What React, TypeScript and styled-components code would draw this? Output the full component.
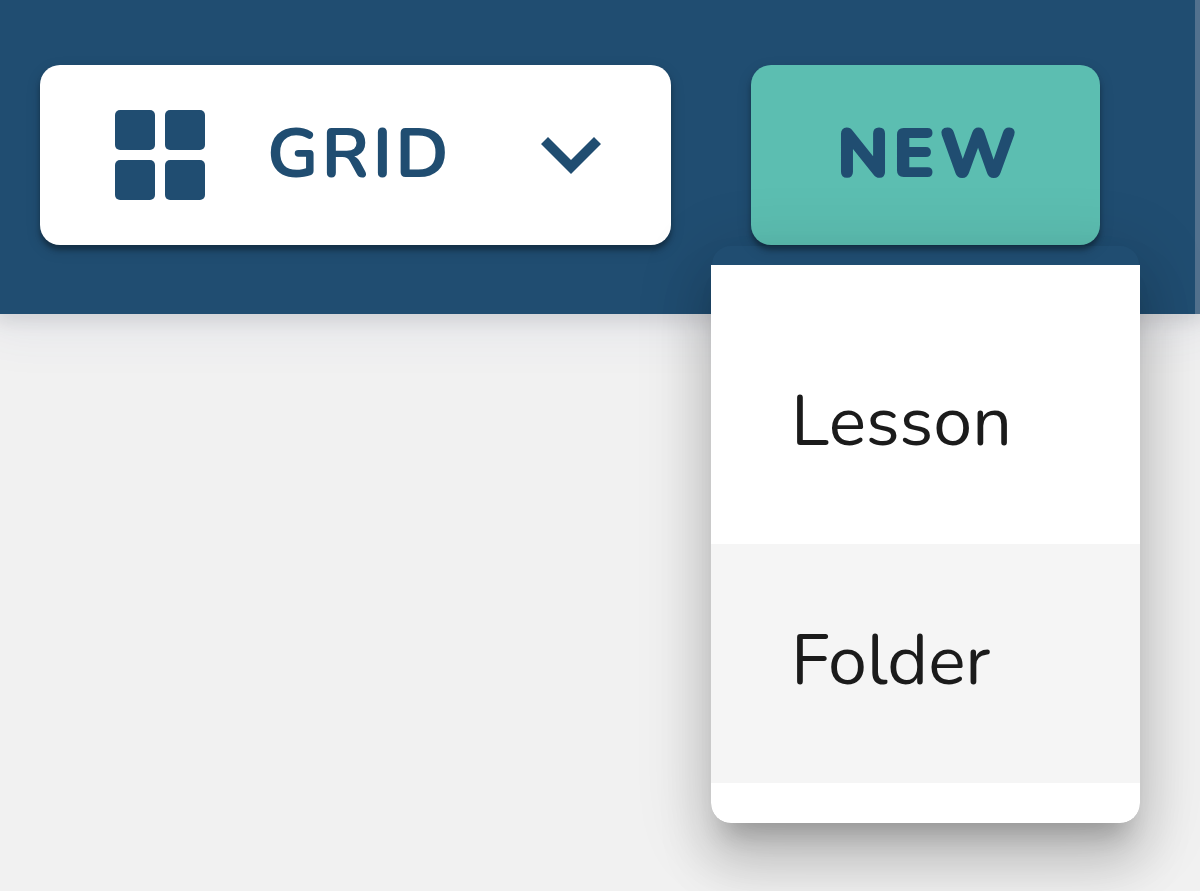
import { useState } from "react";
import styled, { createGlobalStyle } from "styled-components";

const navy = "#204d71";

const GlobalStyle = createGlobalStyle`
  * { box-sizing: border-box; }
  body {
    margin: 0;
    background: #f1f1f1;
    font-family: Nunito, Lato, "Open Sans", sans-serif;
  }
`;

const Page = styled.div`
  min-height: 100vh;
  overflow: hidden;
`;

const Header = styled.header`
  display: flex;
  justify-content: flex-end;
  gap: 80px;
  padding: 65px 95px 69px 40px;
  background: ${navy};
  border-right: 5px solid #52718e;
  box-shadow: 0 0 50px 16px rgba(60, 80, 140, 0.08), 0 4px 16px 4px rgba(0, 0, 0, 0.09);
`;

const controlShadow = "0 5px 5px rgba(0,0,0,.3), 0 5px 15px rgba(0,0,0,.14)";

const ViewPicker = styled.label`
  display: flex;
  align-items: center;
  flex: 0 1 631px;
  height: 180px;
  padding: 0 70px 0 75px;
  border-radius: 20px;
  background: #fff;
  color: ${navy};
  box-shadow: ${controlShadow};
`;

const ViewSelect = styled.select`
  appearance: none;
  flex: 1;
  min-width: 0;
  height: 100%;
  margin: 0;
  padding: 0 0 2px 62px;
  border: 0;
  outline: 0;
  background: transparent;
  color: inherit;
  font: 700 70px/90px Nunito, Lato, sans-serif;
  letter-spacing: 3px;
`;

const PickerIcon = styled.svg`
  display: block;
  flex: none;
  pointer-events: none;
`;

const NewMenu = styled.div`
  position: relative;
  flex: none;
  width: 349px;
`;

const NewButton = styled.button`
  display: block;
  width: 100%;
  height: 180px;
  padding: 0 0 2px 6px;
  border: 0;
  border-radius: 20px;
  background: #5cbeb1;
  color: ${navy};
  font: 900 70px/90px Nunito, Lato, sans-serif;
  letter-spacing: 3px;
  box-shadow: ${controlShadow};
`;

const Menu = styled.div`
  position: absolute;
  top: 100%;
  left: -40px;
  right: -40px;
  padding: 40px 0;
  border-top: 20px solid transparent;
  border-radius: 20px;
  background: #fff;
  background-clip: padding-box;
  box-shadow:
    0 25px 25px -15px rgba(0, 0, 0, 0.2),
    0 40px 50px 5px rgba(0, 0, 0, 0.14),
    0 15px 70px 10px rgba(0, 0, 0, 0.12);
`;

const MenuItem = styled.button<{ $active?: boolean }>`
  display: block;
  width: 100%;
  height: 239px;
  padding: 0 80px 6px;
  border: 0;
  background: ${(p) => (p.$active ? "#f5f5f5" : "#fff")};
  color: #1b1b1b;
  font: 400 70px/90px Nunito, Lato, sans-serif;
  text-align: left;
`;

export default function App() {
  const [open, setOpen] = useState(true);
  return (
    <Page>
      <GlobalStyle />
      <Header>
        <ViewPicker>
          <PickerIcon width="90" height="90" viewBox="0 0 90 90" fill="currentColor" aria-hidden="true">
            <rect width="40" height="40" rx="5" />
            <rect x="50" width="40" height="40" rx="5" />
            <rect y="50" width="40" height="40" rx="5" />
            <rect x="50" y="50" width="40" height="40" rx="5" />
          </PickerIcon>
          <ViewSelect aria-label="View" defaultValue="grid">
            <option value="grid">GRID</option>
          </ViewSelect>
          <PickerIcon width="60" height="38" viewBox="0 0 60 38" fill="currentColor" aria-hidden="true">
            <path d="M7 1 30 24 53 1 60 8 30 38 0 8Z" />
          </PickerIcon>
        </ViewPicker>
        <NewMenu>
          <NewButton aria-haspopup="menu" aria-expanded={open} onClick={() => setOpen(!open)}>
            NEW
          </NewButton>
          {open && (
            <Menu role="menu">
              <MenuItem role="menuitem">Lesson</MenuItem>
              <MenuItem role="menuitem" $active>Folder</MenuItem>
            </Menu>
          )}
        </NewMenu>
      </Header>
    </Page>
  );
}
